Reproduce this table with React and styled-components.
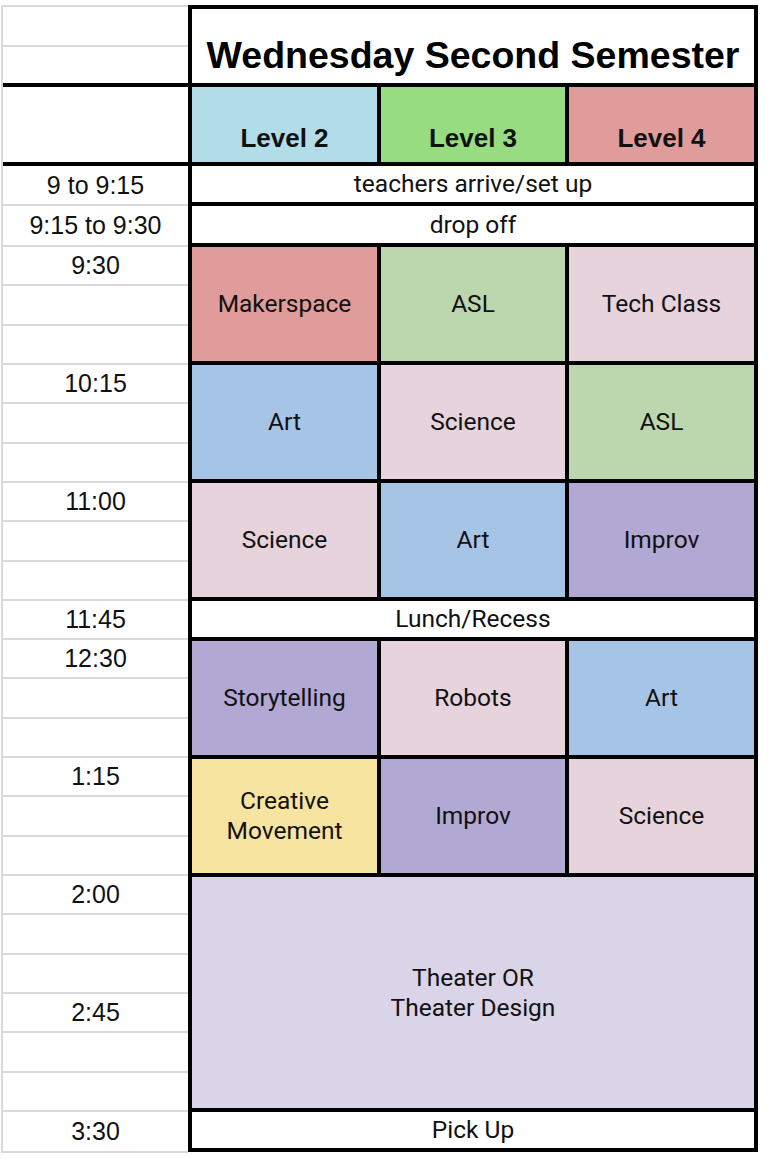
import React from "react";
import styled, { createGlobalStyle } from "styled-components";

const GlobalStyle = createGlobalStyle`
  html, body {
    margin: 0;
    padding: 0;
    background: #ffffff;
  }
  body {
    font-family: "Liberation Sans", Arial, sans-serif;
    color: #000000;
  }
`;

const GRAY = "#d9d9d9";
const BLOCK = 865 / 22;

const colors = {
  level2: "#b2dce8",
  level3: "#97dc80",
  level4: "#e09c9b",
  red: "#e09c9b",
  green: "#bcd6ad",
  pink: "#e6d3dc",
  blue: "#a6c4e6",
  purple: "#b1a8d3",
  yellow: "#f8e4a1",
  lavender: "#d9d4e8",
  white: "#ffffff",
};

// left column: one entry per spreadsheet row
const timeRows = [
  { label: "9 to 9:15", h: 40 },
  { label: "9:15 to 9:30", h: 41 },
  { label: "9:30" }, {}, {},
  { label: "10:15" }, {}, {},
  { label: "11:00" }, {}, {},
  { label: "11:45" },
  { label: "12:30" }, {}, {},
  { label: "1:15" }, {}, {},
  { label: "2:00" }, {}, {},
  { label: "2:45" }, {}, {},
  { label: "3:30", h: 41 },
];

const schedule = [
  { full: "teachers arrive/set up" },
  { full: "drop off" },
  { cells: [["Makerspace", "red"], ["ASL", "green"], ["Tech Class", "pink"]] },
  { cells: [["Art", "blue"], ["Science", "pink"], ["ASL", "green"]] },
  { cells: [["Science", "pink"], ["Art", "blue"], ["Improv", "purple"]] },
  { full: "Lunch/Recess" },
  { cells: [["Storytelling", "purple"], ["Robots", "pink"], ["Art", "blue"]] },
  { cells: [["Creative\nMovement", "yellow"], ["Improv", "purple"], ["Science", "pink"]] },
  { full: "Theater OR\nTheater Design", color: "lavender" },
  { full: "Pick Up" },
];

const Page = styled.div`
  display: flex;
  align-items: flex-start;
  padding: 5px 0 0 1px;
`;

const TimeColumn = styled.div`
  width: 187px;
  display: flex;
  flex-direction: column;
  border-left: 2px solid ${GRAY};
  border-top: 2px solid ${GRAY};
  box-sizing: border-box;
`;

const TimeRow = styled.div`
  height: ${({ h }) => h}px;
  box-sizing: border-box;
  border-bottom: ${({ noLine }) => (noLine ? "none" : `2px solid ${GRAY}`)};
  display: flex;
  align-items: center;
  justify-content: center;
  font-size: 25px;
  color: #111111;
  white-space: nowrap;
`;

const HeaderSpacer = styled.div`
  height: 83px;
  box-sizing: border-box;
  border-top: 4px solid #000000;
  border-bottom: 4px solid #000000;
  margin-right: -1px;
`;

const ScheduleGrid = styled.div`
  display: grid;
  grid-template-columns: 185px 184px 185px;
  grid-template-rows: 74px 75px 36px 37px 114px 114px 114px 36px 114px 114px 231px 36px;
  gap: 4px;
  padding: 4px;
  background: #000000;
`;

const TitleCell = styled.div`
  grid-column: span 3;
  background: #ffffff;
  display: flex;
  align-items: flex-end;
  justify-content: center;
  padding-bottom: 6px;
  box-sizing: border-box;
  font-size: 37.5px;
  font-weight: 700;
  white-space: nowrap;
`;

const LevelCell = styled.div`
  background: ${({ color }) => colors[color]};
  display: flex;
  align-items: flex-end;
  justify-content: center;
  padding-bottom: 8px;
  box-sizing: border-box;
  font-size: 26px;
  font-weight: 700;
  color: #111111;
`;

const Cell = styled.div`
  grid-column: ${({ wide }) => (wide ? "span 3" : "auto")};
  background: ${({ color }) => colors[color] || "#ffffff"};
  display: flex;
  align-items: center;
  justify-content: center;
  text-align: center;
  white-space: pre-line;
  font-family: Roboto, "Liberation Sans", sans-serif;
  font-size: 24.5px;
  line-height: 30px;
  color: #111111;
`;

export default function App() {
  return (
    <>
      <GlobalStyle />
      <Page>
        <TimeColumn>
          <TimeRow h={40} />
          <TimeRow h={36} noLine />
          <HeaderSpacer />
          {timeRows.map((row, i) => (
            <TimeRow key={i} h={row.h || BLOCK}>
              {row.label}
            </TimeRow>
          ))}
        </TimeColumn>
        <ScheduleGrid>
          <TitleCell>Wednesday Second Semester</TitleCell>
          <LevelCell color="level2">Level 2</LevelCell>
          <LevelCell color="level3">Level 3</LevelCell>
          <LevelCell color="level4">Level 4</LevelCell>
          {schedule.map((block, i) =>
            block.full ? (
              <Cell key={i} wide color={block.color}>
                {block.full}
              </Cell>
            ) : (
              block.cells.map(([name, color], j) => (
                <Cell key={`${i}-${j}`} color={color}>
                  {name}
                </Cell>
              ))
            )
          )}
        </ScheduleGrid>
      </Page>
    </>
  );
}
